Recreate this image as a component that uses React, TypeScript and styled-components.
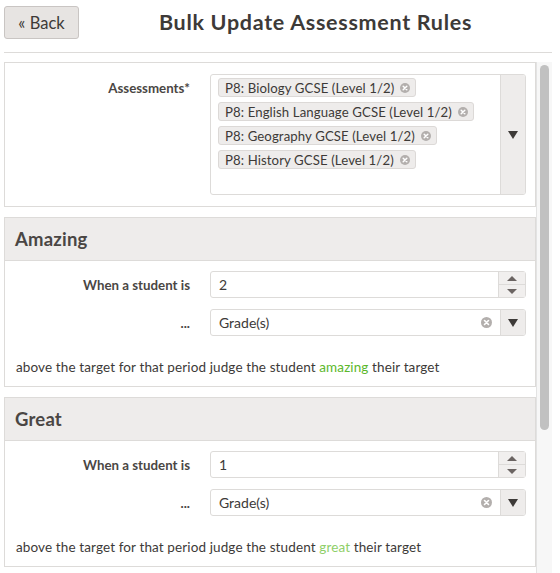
import styled, { createGlobalStyle } from 'styled-components';

const GlobalStyle = createGlobalStyle`
  html, body {
    margin: 0;
    padding: 0;
    height: 100%;
  }
  body {
    font-family: Lato, 'Open Sans', 'Liberation Sans', sans-serif;
    color: #3d3a38;
    background: #fff;
    overflow: hidden;
  }
  * { box-sizing: border-box; }
`;

const Page = styled.div`
  display: flex;
  flex-direction: column;
  height: 100vh;
  padding: 6px 8px 0 4px;
`;

const Header = styled.header`
  display: flex;
  align-items: flex-start;
  height: 47px;
  border-bottom: 1px solid #dddbd9;
  flex-shrink: 0;
`;

const BackButton = styled.button`
  height: 33px;
  width: 75px;
  padding: 0;
  font-family: inherit;
  font-size: 16.5px;
  color: #3d3a38;
  background: #e7e4e2;
  border: 1px solid #c9c5c3;
  border-radius: 3px;
`;

const Title = styled.h1`
  flex: 1;
  margin: 0;
  text-align: center;
  font-size: 21.5px;
  letter-spacing: 0.7px;
  font-weight: 700;
  line-height: 33px;
  color: #3d3a38;
`;

const Main = styled.div`
  flex: 1;
  min-height: 0;
  display: flex;
  margin-top: 9px;
`;

const Content = styled.div`
  flex: 1;
  min-width: 0;
  overflow: hidden;
`;

const Track = styled.div`
  width: 16px;
  flex-shrink: 0;
  padding: 3px 3px 0 3px;
  background: #f7f7f7;
  border-left: 1px solid #e3e3e3;
`;

const Thumb = styled.div`
  width: 9px;
  height: 365px;
  background: #c1c1c1;
  border-radius: 5px;
`;

const Panel = styled.section`
  border: 1px solid #dddbd9;
  margin-bottom: 10px;
  background: #fff;
`;

const PanelHeader = styled.div`
  height: 43px;
  display: flex;
  align-items: center;
  padding: 0 10px;
  background: #eeeceb;
  border-bottom: 1px solid #dddbd9;
  font-size: 18.5px;
  letter-spacing: 0.2px;
  font-weight: 700;
  color: #4a4644;
`;

const PanelBody = styled.div<{ $top?: boolean }>`
  display: grid;
  grid-template-columns: 175px 1fr;
  column-gap: 20px;
  row-gap: 11px;
  padding: ${(p) => (p.$top ? '11px 9px 11px 10px' : '10px 9px 9px 10px')};
`;

const Label = styled.label<{ $start?: boolean }>`
  text-align: right;
  font-size: 13.3px;
  font-weight: 700;
  color: #4a4644;
  line-height: 20px;
  align-self: ${(p) => (p.$start ? 'start' : 'center')};
  padding-top: ${(p) => (p.$start ? '4px' : '0')};
`;

const MultiSelect = styled.div`
  display: flex;
  height: 121px;
  border: 1px solid #dddbd9;
  border-radius: 3px;
`;

const TagList = styled.div`
  flex: 1;
  display: flex;
  flex-direction: column;
  align-items: flex-start;
  gap: 5px;
  padding: 3px 7px;
`;

const Tag = styled.span`
  display: inline-flex;
  align-items: center;
  gap: 6px;
  height: 19px;
  padding: 0 5px 0 6px;
  font-size: 13.2px;
  letter-spacing: 0.1px;
  color: #3d3a38;
  background: #eeeceb;
  border: 1px solid #dcd9d7;
  border-radius: 3px;
  white-space: nowrap;
`;

const ArrowCell = styled.div`
  width: 25px;
  align-self: stretch;
  display: flex;
  align-items: center;
  justify-content: center;
  background: #eeeceb;
  border-left: 1px solid #dddbd9;
  border-radius: 0 2px 2px 0;
`;

const Field = styled.div`
  display: flex;
  align-items: center;
  height: 27px;
  border: 1px solid #dddbd9;
  border-radius: 3px;
  font-size: 14px;
  color: #3d3a38;
`;

const FieldValue = styled.div`
  flex: 1;
  padding-left: 8px;
`;

const Spinner = styled.div`
  width: 27px;
  align-self: stretch;
  display: flex;
  flex-direction: column;
  background: #f1efee;
  border-left: 1px solid #dddbd9;
`;

const SpinHalf = styled.div<{ $first?: boolean }>`
  flex: 1;
  display: flex;
  align-items: center;
  justify-content: center;
  border-bottom: ${(p) => (p.$first ? '1px solid #dddbd9' : 'none')};
`;

const ClearBtn = styled.span`
  display: flex;
  margin-right: 8px;
`;

const Sentence = styled.p`
  grid-column: 1 / -1;
  margin: 10px 0 0;
  padding-left: 1px;
  font-size: 13.5px;
  letter-spacing: 0.12px;
  line-height: 20px;
  color: #3d3a38;
`;

const Judgement = styled.span<{ $color: string }>`
  color: ${(p) => p.$color};
`;

const ClearIcon = ({ size = 10 }: { size?: number }) => (
  <svg width={size} height={size} viewBox="0 0 10 10">
    <circle cx="5" cy="5" r="5" fill="#b3afad" />
    <path d="M3.2 3.2 L6.8 6.8 M6.8 3.2 L3.2 6.8" stroke="#fff" strokeWidth="1.5" strokeLinecap="round" />
  </svg>
);

const CaretDown = ({ color = '#3d3a38' }: { color?: string }) => (
  <svg width="10" height="8" viewBox="0 0 10 8">
    <polygon points="0,0 10,0 5,8" fill={color} />
  </svg>
);

const SpinArrow = ({ up }: { up?: boolean }) => (
  <svg width="10" height="5" viewBox="0 0 10 5">
    <polygon points={up ? '0,5 10,5 5,0' : '0,0 10,0 5,5'} fill="#6b6462" />
  </svg>
);

const assessments = [
  'P8: Biology GCSE (Level 1/2)',
  'P8: English Language GCSE (Level 1/2)',
  'P8: Geography GCSE (Level 1/2)',
  'P8: History GCSE (Level 1/2)',
];

type Rule = {
  title: string;
  amount: number;
  word: string;
  color: string;
};

const rules: Rule[] = [
  { title: 'Amazing', amount: 2, word: 'amazing', color: '#5cb82c' },
  { title: 'Great', amount: 1, word: 'great', color: '#8fcf69' },
];

const RulePanel = ({ rule }: { rule: Rule }) => (
  <Panel>
    <PanelHeader>{rule.title}</PanelHeader>
    <PanelBody>
      <Label>When a student is</Label>
      <Field>
        <FieldValue>{rule.amount}</FieldValue>
        <Spinner>
          <SpinHalf $first>
            <SpinArrow up />
          </SpinHalf>
          <SpinHalf>
            <SpinArrow />
          </SpinHalf>
        </Spinner>
      </Field>
      <Label>...</Label>
      <Field>
        <FieldValue>Grade(s)</FieldValue>
        <ClearBtn>
          <ClearIcon size={11} />
        </ClearBtn>
        <ArrowCell>
          <CaretDown />
        </ArrowCell>
      </Field>
      <Sentence>
        above the target for that period judge the student{' '}
        <Judgement $color={rule.color}>{rule.word}</Judgement> their target
      </Sentence>
    </PanelBody>
  </Panel>
);

export default function App() {
  return (
    <>
      <GlobalStyle />
      <Page>
        <Header>
          <BackButton>« Back</BackButton>
          <Title>Bulk Update Assessment Rules</Title>
        </Header>
        <Main>
          <Content>
            <Panel>
              <PanelBody $top>
                <Label $start>Assessments*</Label>
                <MultiSelect>
                  <TagList>
                    {assessments.map((a) => (
                      <Tag key={a}>
                        {a}
                        <ClearIcon />
                      </Tag>
                    ))}
                  </TagList>
                  <ArrowCell>
                    <CaretDown />
                  </ArrowCell>
                </MultiSelect>
              </PanelBody>
            </Panel>
            {rules.map((r) => (
              <RulePanel key={r.title} rule={r} />
            ))}
          </Content>
          <Track>
            <Thumb />
          </Track>
        </Main>
      </Page>
    </>
  );
}
